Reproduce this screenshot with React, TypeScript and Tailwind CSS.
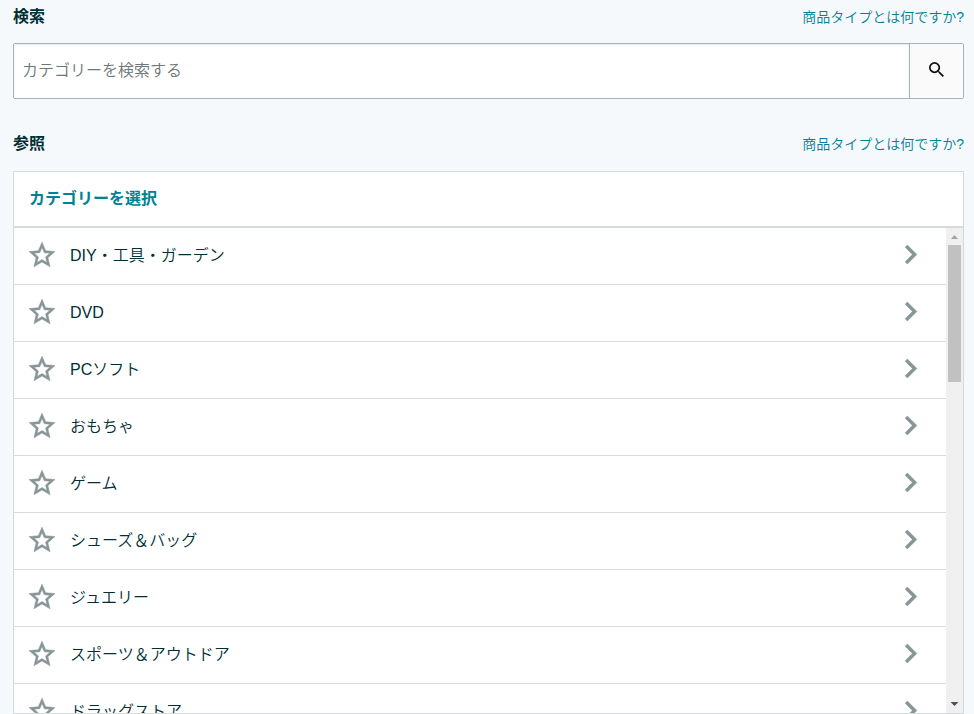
import { useState } from "react";

const CATEGORIES = [
  "DIY・工具・ガーデン",
  "DVD",
  "PCソフト",
  "おもちゃ",
  "ゲーム",
  "シューズ＆バッグ",
  "ジュエリー",
  "スポーツ＆アウトドア",
  "ドラッグストア",
];

function StarIcon() {
  return (
    <svg
      viewBox="2 2 20 19"
      className="h-[25px] w-[26px] overflow-visible"
      fill="currentColor"
      stroke="currentColor"
      strokeWidth="0.4"
      aria-hidden="true"
    >
      <path d="M22 9.24l-7.19-.62L12 2 9.19 8.63 2 9.24l5.46 4.73L5.82 21 12 17.27 18.18 21l-1.63-7.03L22 9.24zM12 15.4l-3.76 2.27 1-4.28-3.32-2.88 4.38-.38L12 6.1l1.71 4.04 4.38.38-3.32 2.88 1 4.28L12 15.4z" />
    </svg>
  );
}

function ChevronIcon() {
  return (
    <svg
      viewBox="8.59 6 7.41 12"
      className="h-[19px] w-3 overflow-visible"
      fill="currentColor"
      stroke="currentColor"
      strokeWidth="0.3"
      aria-hidden="true"
    >
      <path d="M10 6L8.59 7.41 13.17 12l-4.58 4.59L10 18l6-6z" />
    </svg>
  );
}

function SearchIcon() {
  return (
    <svg viewBox="3 3 17.5 17.5" className="size-[15px]" fill="currentColor" aria-hidden="true">
      <path d="M15.5 14h-.79l-.28-.27A6.471 6.471 0 0 0 16 9.5 6.5 6.5 0 1 0 9.5 16c1.61 0 3.09-.59 4.23-1.57l.27.28v.79l5 4.99L20.49 19l-4.99-5zm-6 0C7.01 14 5 11.99 5 9.5S7.01 5 9.5 5 14 7.01 14 9.5 11.99 14 9.5 14z" />
    </svg>
  );
}

function SectionHeading({ title, htmlFor }: { title: string; htmlFor?: string }) {
  return (
    <div className="flex h-[34px] items-center justify-between">
      {htmlFor ? (
        <label htmlFor={htmlFor} className="font-bold">
          {title}
        </label>
      ) : (
        <h2 className="font-bold">{title}</h2>
      )}
      <a href="#product-type" className="text-sm font-[350] text-[#008296]">
        商品タイプとは何ですか?
      </a>
    </div>
  );
}

function ScrollTrack() {
  return (
    <div className="flex w-[17px] shrink-0 flex-col items-center bg-[#f0f0f0]" aria-hidden="true">
      <svg viewBox="0 0 17 17" className="size-[17px] shrink-0 fill-[#a3a3a3]">
        <path d="M5 11 L8.5 7 L12 11 Z" />
      </svg>
      <div className="h-[137px] w-[13px] bg-[#c1c1c1]" />
      <svg viewBox="0 0 17 17" className="mt-auto size-[17px] shrink-0 fill-[#505050]">
        <path d="M4.5 6 L12.5 6 L8.5 10 Z" />
      </svg>
    </div>
  );
}

export default function App() {
  const [query, setQuery] = useState("");

  return (
    <main className="min-h-screen bg-[#f6f9fb] pr-2.5 pl-[13px] font-['Liberation_Sans','Noto_Sans_CJK_JP',sans-serif] text-base text-[#002f36]">
      <section>
        <SectionHeading title="検索" htmlFor="category-search" />
        <form
          className="mt-[9px] flex h-14 overflow-hidden rounded-xs border border-[#a6b3b4] bg-white"
          onSubmit={(event) => event.preventDefault()}
        >
          <input
            id="category-search"
            type="text"
            value={query}
            onChange={(event) => setQuery(event.target.value)}
            placeholder="カテゴリーを検索する"
            className="min-w-0 flex-1 px-2 font-[350] shadow-[inset_0_1px_2px_#e3e8e9] outline-none placeholder:text-[#6c7778]"
          />
          <button
            type="submit"
            aria-label="検索"
            className="flex w-[54px] items-center justify-center border-l border-[#a6b3b4] bg-[#fafafa] pb-[3px] text-[#111111]"
          >
            <SearchIcon />
          </button>
        </form>
      </section>

      <section className="pt-7">
        <SectionHeading title="参照" />
        <div className="mt-2.5 border border-[#d5dbdb] bg-white">
          <h3 className="flex h-14 items-center border-b-2 border-[#d5dbdb] px-[15px] font-bold text-[#008296]">
            カテゴリーを選択
          </h3>
          <div className="flex h-[485px]">
            <ul className="min-w-0 flex-1 overflow-hidden">
              {CATEGORIES.map((name) => (
                <li key={name} className="flex h-[57px] items-center border-b border-[#d5dbdb] pl-[15px]">
                  <button type="button" aria-label={`${name}をお気に入りに追加`} className="pb-[3px] text-[#879596]">
                    <StarIcon />
                  </button>
                  <button type="button" className="flex h-full flex-1 items-center justify-between pr-[29px] pl-[15px] text-left font-[350]">
                    {name}
                    <span className="pb-[3px] text-[#879596]">
                      <ChevronIcon />
                    </span>
                  </button>
                </li>
              ))}
            </ul>
            <ScrollTrack />
          </div>
        </div>
      </section>
    </main>
  );
}
